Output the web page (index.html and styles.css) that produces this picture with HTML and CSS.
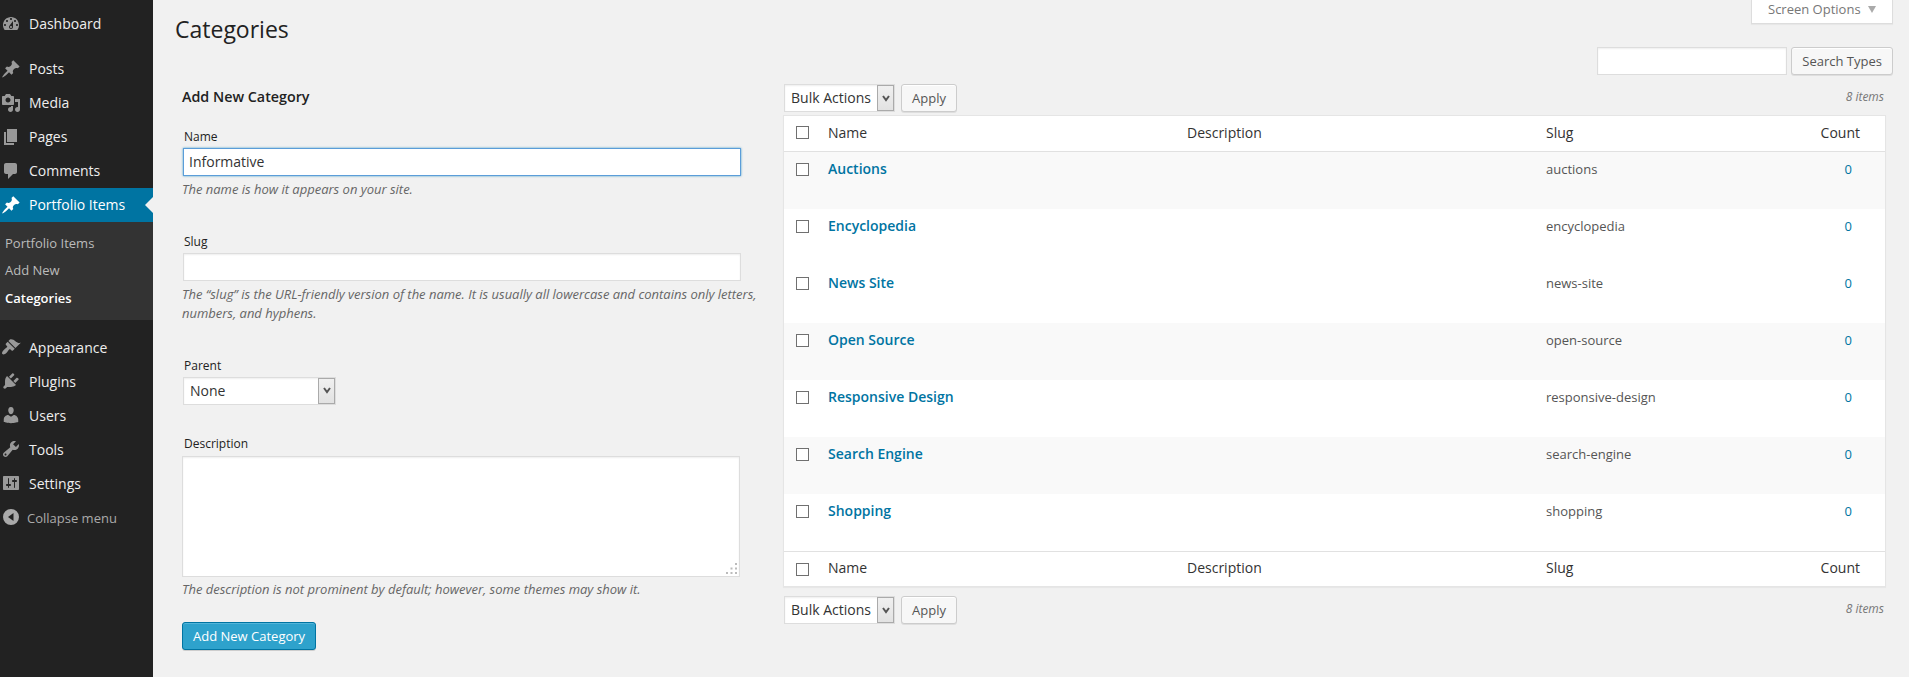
FILE: index.html
```
<!DOCTYPE html>
<html lang="en">
<head>
<meta charset="utf-8">
<title>Categories</title>
<link rel="stylesheet" href="styles.css">
</head>
<body>
<div class="admin">
  <nav class="menu">
    <div class="menu-group">
    <a class="menu-item"><svg class="icon" viewBox="0 0 20 20"><path fill-rule="evenodd" d="M3.76 16h12.48c1.1-1.37 1.76-3.11 1.76-5 0-4.42-3.58-8-8-8s-8 3.58-8 8c0 1.89.66 3.63 1.76 5zM10 4c.55 0 1 .45 1 1s-.45 1-1 1-1-.45-1-1 .45-1 1-1zM6 6c.55 0 1 .45 1 1s-.45 1-1 1-1-.45-1-1 .45-1 1-1zm8 0c.55 0 1 .45 1 1s-.45 1-1 1-1-.45-1-1 .45-1 1-1zm-5.37 5.55L12 7v6c0 1.1-.9 2-2 2s-2-.9-2-2c0-.57.24-1.08.63-1.45zM4 10c.55 0 1 .45 1 1s-.45 1-1 1-1-.45-1-1 .45-1 1-1zm12 0c.55 0 1 .45 1 1s-.45 1-1 1-1-.45-1-1 .45-1 1-1zm-5 3c0-.55-.45-1-1-1s-1 .45-1 1 .45 1 1 1 1-.45 1-1z"/></svg>Dashboard</a>
    <div class="separator"></div>
    <a class="menu-item"><svg class="icon" viewBox="0 0 20 20"><path d="M10.44 3.02l1.82-1.82 6.36 6.35-1.83 1.82c-1.05-.68-2.48-.57-3.41.36l-.75.75c-.92.93-1.04 2.35-.35 3.41l-1.83 1.82-2.41-2.41-2.8 2.79c-.42.42-3.38 2.71-3.8 2.29s1.86-3.39 2.28-3.81l2.79-2.79L4.1 9.36l1.83-1.82c1.05.69 2.48.57 3.4-.36l.75-.75c.93-.92 1.05-2.35.36-3.41z"/></svg>Posts</a>
    <a class="menu-item"><svg class="icon" viewBox="0 0 20 20"><path fill-rule="evenodd" d="M13 11V4c0-.55-.45-1-1-1h-1.67L9 1H5L3.67 3H2c-.55 0-1 .45-1 1v7c0 .55.45 1 1 1h10c.55 0 1-.45 1-1zM7 4.5c1.38 0 2.5 1.12 2.5 2.5S8.38 9.5 7 9.5 4.500 8.380 4.500 7 5.620 4.500 7 4.500zM14 6h5v10.500c0 1.380-1.120 2.500-2.500 2.500S14 17.880 14 16.500s1.120-2.500 2.500-2.500c.17 0 .34.02.5.05V9h-3V6zm-4 8.050V13h2v3.500c0 1.380-1.120 2.500-2.500 2.500S7 17.880 7 16.500 8.120 14 9.500 14c.17 0 .34.02.5.05z"/></svg>Media</a>
    <a class="menu-item"><svg class="icon" viewBox="0 0 20 20"><path d="M6 15V2h10v13H6zm-1 1h8v2H3V5h2v11z"/></svg>Pages</a>
    <a class="menu-item"><svg class="icon" viewBox="0 0 20 20"><path d="M5 2h9c1.100 0 2 .9 2 2v7c0 1.100-.9 2-2 2h-2l-5 5v-5H5c-1.100 0-2-.9-2-2V4c0-1.100.9-2 2-2z"/></svg>Comments</a>
    <a class="menu-item current"><svg class="icon" viewBox="0 0 20 20"><path d="M10.44 3.02l1.82-1.82 6.36 6.35-1.83 1.82c-1.05-.68-2.48-.57-3.41.36l-.75.75c-.92.93-1.04 2.35-.35 3.41l-1.83 1.82-2.41-2.41-2.8 2.79c-.42.42-3.38 2.71-3.8 2.29s1.86-3.39 2.28-3.81l2.79-2.79L4.1 9.36l1.83-1.82c1.05.69 2.48.57 3.4-.36l.75-.75c.93-.92 1.05-2.35.36-3.41z"/></svg>Portfolio Items</a>
    </div>
    <div class="submenu">
      <a class="sub-item">Portfolio Items</a>
      <a class="sub-item">Add New</a>
      <a class="sub-item sub-current">Categories</a>
    </div>
    <div class="separator"></div>
    <a class="menu-item"><svg class="icon" viewBox="0 0 20 20"><path d="M14.48 11.06L7.41 3.99l1.5-1.5c.5-.56 2.3-.47 3.51.32 1.21.8 1.43 1.28 2.91 2.1 1.18.64 2.45 1.26 4.45.85zm-.71.71L6.7 4.7 4.93 6.47c-.39.39-.39 1.02 0 1.41l1.06 1.06c.39.39.39 1.03 0 1.42-.6.6-1.43 1.11-2.21 1.69-.35.26-.7.53-1.01.84C1.43 14.23.4 16.08 1.4 17.07c.99 1 2.84-.03 4.18-1.36.31-.31.58-.66.85-1.02.57-.78 1.08-1.61 1.69-2.21.39-.39 1.02-.39 1.41 0l1.06 1.06c.39.39 1.02.39 1.41 0z"/></svg>Appearance</a>
    <a class="menu-item"><svg class="icon" viewBox="0 0 20 20"><path d="M13.11 4.36L9.87 7.6 8 5.73l3.24-3.24c.35-.34 1.05-.2 1.56.32.52.51.66 1.21.31 1.55zm-8 1.77l.91-1.12 9.01 9.01-1.19.84c-.71.71-2.63 1.16-3.82 1.16H6.14L4.9 17.26c-.59.59-1.54.59-2.12 0-.59-.58-.59-1.53 0-2.12l1.24-1.24v-3.88c0-1.13.4-3.19 1.09-3.89zm7.26 3.97l3.24-3.24c.34-.35 1.04-.21 1.55.31.52.51.66 1.21.31 1.55l-3.24 3.25z"/></svg>Plugins</a>
    <a class="menu-item"><svg class="icon" viewBox="0 0 20 20"><path d="M10 9.25c-2.27 0-2.73-3.44-2.73-3.44C7 4.02 7.82 2 9.97 2c2.16 0 2.98 2.02 2.71 3.81 0 0-.41 3.44-2.68 3.44zm0 2.57L12.72 10c2.39 0 4.52 2.33 4.52 4.53v2.49s-3.65 1.13-7.24 1.13c-3.65 0-7.24-1.13-7.24-1.13v-2.49c0-2.25 1.94-4.48 4.47-4.48z"/></svg>Users</a>
    <a class="menu-item"><svg class="icon" viewBox="0 0 20 20"><path fill-rule="evenodd" d="M16.68 9.77c-1.34 1.34-3.3 1.67-4.95.99l-5.41 6.52c-.99.99-2.59.99-3.58 0s-.99-2.59 0-3.57l6.52-5.42c-.68-1.65-.35-3.61.99-4.95 1.28-1.28 3.12-1.62 4.72-1.06l-2.89 2.89 2.82 2.82 2.86-2.87c.53 1.58.18 3.39-1.08 4.65zM3.81 16.21c.4.39 1.04.39 1.43 0 .4-.4.4-1.04 0-1.43-.39-.4-1.03-.4-1.43 0-.39.39-.39 1.03 0 1.43z"/></svg>Tools</a>
    <a class="menu-item"><svg class="icon" viewBox="0 0 20 20"><path fill-rule="evenodd" d="M18 16V4c0-.55-.45-1-1-1H3c-.55 0-1 .45-1 1v12c0 .55.45 1 1 1h14c.55 0 1-.45 1-1zM8 11h1c.55 0 1 .45 1 1s-.45 1-1 1H8v1.500c0 .28-.22.5-.5.5s-.5-.22-.5-.5V13H6c-.55 0-1-.45-1-1s.45-1 1-1h1V5.500c0-.28.22-.5.5-.5s.5.22.5.5V11zm5-2h-1c-.55 0-1-.45-1-1s.45-1 1-1h1V5.500c0-.28.22-.5.5-.5s.5.22.5.5V7h1c.55 0 1 .45 1 1s-.45 1-1 1h-1v5.500c0 .28-.22.5-.5.5s-.5-.22-.5-.5V9z"/></svg>Settings</a>
    <a class="menu-item collapse"><svg class="icon" viewBox="0 0 20 20"><path fill-rule="evenodd" d="M10 2a8 8 0 1 0 0 16 8 8 0 0 0 0-16zM12.500 6v8L7 10z"/></svg>Collapse menu</a>
  </nav>

  <main class="content">
    <header class="top">
      <h1 class="title">Categories</h1>
      <div class="screen-options">Screen Options<svg class="caret" viewBox="0 0 8 7"><path d="M0 0h8L4 7z"/></svg></div>
    </header>

    <div class="search">
      <input class="field search-field" type="text">
      <button class="button">Search Types</button>
    </div>

    <div class="columns">
      <section class="form">
        <h2 class="form-title">Add New Category</h2>
        <label class="label">Name</label>
        <input class="field text-field focused" type="text" value="Informative">
        <p class="hint">The name is how it appears on your site.</p>
        <label class="label label-slug">Slug</label>
        <input class="field text-field" type="text">
        <p class="hint">The “slug” is the URL-friendly version of the name. It is usually all lowercase and contains only letters, numbers, and hyphens.</p>
        <label class="label label-parent">Parent</label>
        <div class="select select-parent"><span>None</span><span class="drop"><svg class="chevron" viewBox="0 0 8 7"><path d="M1 1l3 4 3-4"/></svg></span></div>
        <label class="label label-desc">Description</label>
        <div class="area"><svg class="grip" viewBox="0 0 12 12"><path d="M9 0h2v2H9zM4.500 4.500h2v2h-2zM9 4.500h2v2H9zM0 9h2v2H0zM4.500 9h2v2h-2zM9 9h2v2H9z"/></svg></div>
        <p class="hint hint-desc">The description is not prominent by default; however, some themes may show it.</p>
        <button class="button primary">Add New Category</button>
      </section>

      <section class="list">
        <div class="tablenav">
          <div class="select select-bulk"><span>Bulk Actions</span><span class="drop"><svg class="chevron" viewBox="0 0 8 7"><path d="M1 1l3 4 3-4"/></svg></span></div>
          <button class="button">Apply</button>
          <span class="total">8 items</span>
        </div>
        <div class="table">
          <div class="row head"><input class="check" type="checkbox"><span>Name</span><span>Description</span><span>Slug</span><span class="count">Count</span></div>
          <div class="row alt"><input class="check" type="checkbox"><a class="name">Auctions</a><span></span><span>auctions</span><a class="num">0</a></div>
          <div class="row"><input class="check" type="checkbox"><a class="name">Encyclopedia</a><span></span><span>encyclopedia</span><a class="num">0</a></div>
          <div class="row"><input class="check" type="checkbox"><a class="name">News Site</a><span></span><span>news-site</span><a class="num">0</a></div>
          <div class="row alt"><input class="check" type="checkbox"><a class="name">Open Source</a><span></span><span>open-source</span><a class="num">0</a></div>
          <div class="row"><input class="check" type="checkbox"><a class="name">Responsive Design</a><span></span><span>responsive-design</span><a class="num">0</a></div>
          <div class="row alt"><input class="check" type="checkbox"><a class="name">Search Engine</a><span></span><span>search-engine</span><a class="num">0</a></div>
          <div class="row"><input class="check" type="checkbox"><a class="name">Shopping</a><span></span><span>shopping</span><a class="num">0</a></div>
          <div class="row foot"><input class="check" type="checkbox"><span>Name</span><span>Description</span><span>Slug</span><span class="count">Count</span></div>
        </div>
        <div class="tablenav bottom">
          <div class="select select-bulk"><span>Bulk Actions</span><span class="drop"><svg class="chevron" viewBox="0 0 8 7"><path d="M1 1l3 4 3-4"/></svg></span></div>
          <button class="button">Apply</button>
          <span class="total">8 items</span>
        </div>
      </section>
    </div>
  </main>
</div>
</body>
</html>
```
FILE: styles.css
```
* { box-sizing: border-box; }
body {
  margin: 0;
  background: #f1f1f1;
  color: #444;
  font: 13px/19px "Open Sans", sans-serif;
}
.admin { display: flex; height: 677px; overflow: hidden; }

/* Sidebar */
.menu { flex: none; width: 153px; padding-top: 7px; background: #222; }
.menu-item {
  display: flex;
  align-items: center;
  gap: 8px;
  height: 34px;
  padding: 0 0 2px 1px;
  color: #eee;
  font-size: 14px;
}
.icon { flex: none; width: 20px; height: 20px; fill: #999; }
.menu-group .icon { margin-top: 2px; }
.separator { height: 11px; }
.current { color: #fff; background: #0074a2; }
.current .icon { fill: #fff; }
.current::after {
  content: "";
  margin: 2px 0 0 auto;
  border: 8px solid transparent;
  border-left-width: 0;
  border-right-color: #f1f1f1;
}
.submenu { height: 98px; padding-top: 8px; background: #333; }
.sub-item { display: block; height: 27px; padding-left: 5px; line-height: 27px; color: #bbb; }
.sub-current { height: 28px; line-height: 29px; color: #fff; font-weight: 600; }
.collapse { gap: 6px; padding-bottom: 0; color: #aaa; font-size: 13px; }
.collapse .icon { margin-bottom: 2px; fill: #aaa; }

/* Page header */
.content { flex: 1; padding: 0 16px 0 22px; }
.top { display: flex; justify-content: space-between; align-items: flex-start; height: 47px; }
.title { margin: 15px 0 0; color: #222; font-size: 23px; line-height: 29px; font-weight: 400; }
.screen-options {
  display: flex;
  gap: 7px;
  width: 142px;
  height: 24px;
  padding-left: 16px;
  border: 1px solid #ddd;
  border-top: 0;
  background: #fff;
  box-shadow: 0 1px 1px rgba(0, 0, 0, .04);
  color: #777;
}
.caret { width: 8px; height: 7px; margin-top: 6px; fill: #aaa; }
.search { display: flex; justify-content: flex-end; gap: 4px; height: 37px; }
.columns { display: flex; }

/* Controls */
.field {
  height: 28px;
  margin: 0;
  padding: 0 5px 2px;
  border: 1px solid #ddd;
  background: #fff;
  box-shadow: inset 0 1px 2px rgba(0, 0, 0, .07);
  color: #333;
  font: 14px "Open Sans", sans-serif;
}
.search-field { width: 190px; }
.text-field { display: block; width: 558px; margin-left: 1px; }
.focused { border-color: #5b9dd9; box-shadow: 0 0 2px rgba(30, 140, 190, .8); }
.button {
  height: 28px;
  padding: 1px 10px 0;
  border: 1px solid #ccc;
  border-radius: 3px;
  background: #f7f7f7;
  box-shadow: inset 0 1px 0 #fff, 0 1px 0 rgba(0, 0, 0, .08);
  color: #555;
  font: 13px/25px "Open Sans", sans-serif;
}
.primary {
  display: block;
  border-color: #0074a2;
  background: #2ea2cc;
  box-shadow: inset 0 1px 0 rgba(120, 200, 230, .5), 0 1px 0 rgba(0, 0, 0, .15);
  color: #fff;
}
.select {
  display: flex;
  justify-content: space-between;
  align-items: center;
  height: 28px;
  padding-left: 6px;
  border: 1px solid #ddd;
  background: #fff;
  box-shadow: inset 0 1px 2px rgba(0, 0, 0, .07);
  color: #333;
  font-size: 14px;
}
.select-bulk { padding-bottom: 1px; }
.drop {
  display: flex;
  align-items: center;
  justify-content: center;
  width: 17px;
  height: 26px;
  border: 1px solid #aaa;
  background: linear-gradient(#f0f0f0, #e2e2e2);
}
.chevron { width: 8px; height: 7px; fill: none; stroke: #555; stroke-width: 2; }
.select-parent { width: 153px; margin-left: 1px; }
.select-bulk { width: 111px; margin: 0 6px 0 1px; }
.select-bulk .drop { margin-bottom: -1px; }

/* Form column */
.form { flex: none; width: 608px; padding-left: 7px; }
.form-title { margin: 3px 0 21px; color: #222; font-size: 14.3px; line-height: 20px; font-weight: 600; }
.label { display: block; height: 20px; margin-left: 2px; color: #222; font-size: 12px; line-height: 18px; }
.hint { width: 590px; margin: 4px 0 0; color: #666; font-style: italic; line-height: 19.5px; letter-spacing: -.01px; }
.hint-desc { margin-top: 3px; }
.label-slug { margin-top: 33px; }
.label-parent { margin-top: 33px; }
.label-desc { margin-top: 30px; }
.area {
  display: flex;
  justify-content: flex-end;
  align-items: flex-end;
  width: 558px;
  height: 121px;
  margin-top: 1px;
  border: 1px solid #ddd;
  background: #fff;
  box-shadow: inset 0 1px 2px rgba(0, 0, 0, .07);
}
.grip { width: 12px; height: 12px; margin: 0 1px 1px 0; fill: #bbb; }
.primary { margin-top: 23px; }

/* Table column */
.list { width: 1103px; }
.tablenav { display: flex; height: 31px; }
.bottom { margin-top: 9px; }
.total { margin: 3px 2px 0 auto; color: #777; font-size: 12px; font-style: italic; }
.table { height: 472px; border: 1px solid #e5e5e5; background: #fff; box-shadow: 0 1px 1px rgba(0, 0, 0, .04); }
.row {
  display: grid;
  grid-template-columns: 32px 359px 359px 240px 1fr;
  height: 57px;
  padding: 8px 0 0 12px;
  color: #555;
}
.alt { background: #f9f9f9; }
.head, .foot { color: #333; font-size: 14px; }
.head { height: 36px; padding-top: 7px; border-bottom: 1px solid #e1e1e1; }
.foot { height: 35px; padding-top: 6px; border-top: 1px solid #e1e1e1; }
.check {
  appearance: none;
  width: 13px;
  height: 13px;
  margin: 3px 0 0;
  border: 1px solid #707070;
  background: #fff;
}
.foot .check { margin-top: 5px; }
.head .check { margin-top: 3px; }
.name { color: #0074a2; font-size: 14px; font-weight: 600; line-height: 17px; }
.count { padding-right: 25px; text-align: right; }
.num { padding-right: 33px; color: #0074a2; text-align: right; }
```
